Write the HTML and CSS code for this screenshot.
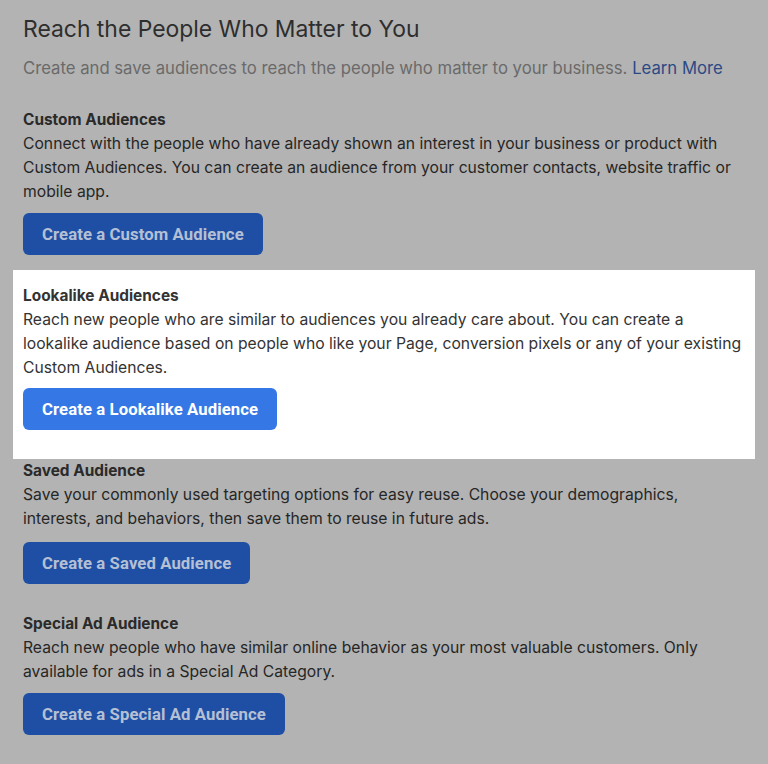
FILE: index.html
```html
<!DOCTYPE html>
<html>
<head>
<meta charset="utf-8">
<link rel="stylesheet" href="styles.css">
</head>
<body>
<div class="page">
  <h1 class="title">Reach the People Who Matter to You</h1>
  <p class="subtitle">Create and save audiences to reach the people who matter to your business. <a class="learn">Learn More</a></p>

  <section class="sec">
    <h2 class="head">Custom Audiences</h2>
    <p class="desc">Connect with the people who have already shown an interest in your business or product with Custom Audiences. You can create an audience from your customer contacts, website traffic or mobile app.</p>
    <button class="btn">Create a Custom Audience</button>
  </section>

  <section class="sec sec-active">
    <h2 class="head">Lookalike Audiences</h2>
    <p class="desc">Reach new people who are similar to audiences you already care about. You can create a lookalike audience based on people who like your Page, conversion pixels or any of your existing Custom Audiences.</p>
    <button class="btn btn-active">Create a Lookalike Audience</button>
  </section>

  <section class="sec sec-after">
    <h2 class="head">Saved Audience</h2>
    <p class="desc">Save your commonly used targeting options for easy reuse. Choose your demographics, interests, and behaviors, then save them to reuse in future ads.</p>
    <button class="btn btn-saved">Create a Saved Audience</button>
  </section>

  <section class="sec">
    <h2 class="head">Special Ad Audience</h2>
    <p class="desc">Reach new people who have similar online behavior as your most valuable customers. Only available for ads in a Special Ad Category.</p>
    <button class="btn">Create a Special Ad Audience</button>
  </section>
</div>
</body>
</html>
```
FILE: styles.css
```css
html, body {
  margin: 0;
  padding: 0;
  background: #b3b3b3;
}
body {
  font-family: Inter, "Liberation Sans", Arial, sans-serif;
  color: #2a2a2a;
}
.page {
  padding: 14px 23px 0 23px;
}
.title {
  margin: 0;
  font-size: 22.9px;
  line-height: 30px;
  font-weight: 400;
  color: #2e2e2e;
}
.subtitle {
  margin: 12px 0 15px;
  font-size: 16.7px;
  line-height: 24px;
  color: #6a6a6a;
}
.learn {
  color: #2b4a85;
  text-decoration: none;
}
.sec {
  padding: 13px 0 15px;
}
.sec-active {
  background: #ffffff;
  margin: 0 -10px;
  padding: 14px 10px 29px 10px;
}
.sec-active .btn {
  margin-top: 8px;
}
.sec-after {
  padding-top: 0;
}
.head {
  margin: 0;
  font-size: 15.4px;
  line-height: 24px;
  font-weight: 700;
  color: #2a2a2a;
}
.desc {
  margin: 0;
  font-size: 15.7px;
  line-height: 24px;
  color: #262626;
}
.sec-active .desc, .sec-active .head {
  color: #333333;
}
.btn {
  display: block;
  margin-top: 9px;
  height: 42px;
  padding: 0 19px;
  border: none;
  border-radius: 6px;
  background: #1f4fa5;
  color: #b5c0d4;
  font-family: Roboto, "Liberation Sans", Arial, sans-serif;
  font-size: 16.7px;
  font-weight: 700;
  letter-spacing: 0.1px;
}
.btn-active {
  background: #3578e5;
  color: #ffffff;
}
.btn-saved {
  margin-top: 11px;
}
```
